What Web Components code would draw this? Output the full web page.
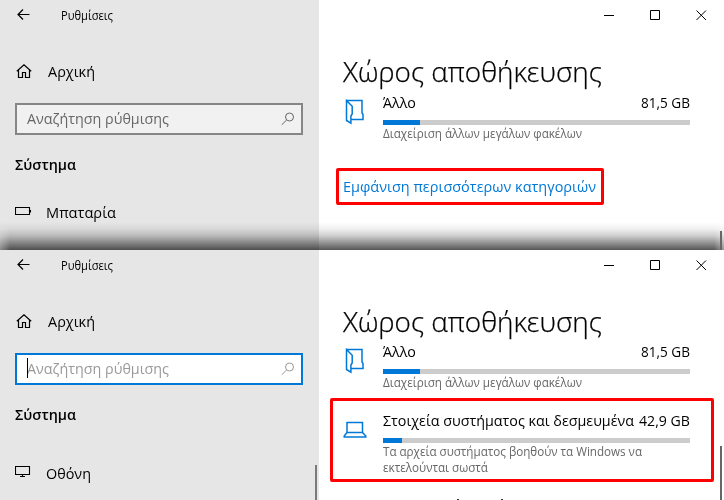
<!DOCTYPE html>
<html lang="el">
<head>
<meta charset="utf-8">
<title>Ρυθμίσεις</title>
<style>
html,body{margin:0;width:724px;height:500px;overflow:hidden;background:#fff}
body{font-family:"Open Sans","Noto Sans",sans-serif;color:#000}
</style>
</head>
<body>
<settings-shots></settings-shots>
<script>
const define = (name, html, setup) => customElements.define(name, class extends HTMLElement {
  connectedCallback() {
    if (this.shadowRoot) return;
    const root = this.attachShadow({mode: 'open'});
    root.innerHTML = typeof html === 'function' ? html(this) : html;
    if (setup) setup(this, root);
  }
});

/* One line of text, condensed or widened to the width given in pixels. */
define('fit-text', `<style>
:host{display:block;height:20px;line-height:20px;white-space:nowrap;font-size:15px}
span{display:inline-block;transform-origin:0 0}
</style><span><slot></slot></span>`, (el, root) => {
  const span = root.querySelector('span'), w = +el.getAttribute('width');
  el.style.width = w + 'px';
  span.style.transform = `scaleX(${w / span.getBoundingClientRect().width})`;
});

const icons = {
  back: [16, 12, '<path d="M12.500 5.500H1M6 .5l-5 5 5 5"/>'],
  home: [16, 16, '<path d="M.8 8.300 8 1.700l7.200 6.600M2.500 7.300v7.200h4V9.500h3v5h4V7.300"/>'],
  search: [14, 14, '<circle cx="8.500" cy="5" r="4"/><path d="M5.600 8 .7 12.800"/>'],
  battery: [17, 10, '<path d="M.5.500h14v7H.5zM15.500 3v2.500"/>'],
  screen: [16, 14, '<path d="M.5.500h14v8H.5zM7.500 8.500v2M5 10.500h5"/>'],
  folder: [20, 26, '<path d="M1.500 1.500H17V14l1 1.500v5H6M1.500 1.500v20l4.400 2.700V17l1.300-2V7.200z"/>'],
  laptop: [24, 17, '<path d="M4 1.500h15.500v10H4zM4 11.500 1.200 15v1h21.600v-1l-3.300-3.500"/>'],
  min: [11, 11, '<path d="M0 5.500h10"/>'],
  max: [11, 11, '<path d="M.5.500h9v9h-9z"/>'],
  close: [11, 11, '<path d="m.5.500 9.500 9.500M10 .5.500 10"/>']
};
define('line-icon', el => {
  const [w, h, p] = icons[el.getAttribute('name')];
  return `<style>:host{display:block;width:${w}px;height:${h}px;flex:none}svg{display:block}</style>
<svg width="${w}" height="${h}" viewBox="0 0 ${w} ${h}" fill="none" stroke="currentColor">${p}</svg>`;
}, (el, root) => { root.querySelector('svg').style.strokeWidth = el.getAttribute('stroke') || 1; });

define('search-box', `<style>
:host{display:flex;box-sizing:border-box;width:288px;height:32px;border:2px solid #868686;background:#f1f1f1;color:#666;padding:3px 6px 0 10px;justify-content:space-between;position:relative}
:host([active]){border-color:#0078d7;background:#fff;color:#999}
i{display:none;position:absolute;left:10px;top:3px;width:1px;height:20px;background:#000}
:host([active]) i{display:block}
line-icon{margin-top:4px}
</style><fit-text width="142">Αναζήτηση ρύθμισης</fit-text><i></i><line-icon name="search"></line-icon>`);

define('side-nav', el => `<style>
:host{display:block;position:relative;box-sizing:border-box;background:#e6e6e6;height:250px;padding-left:15px}
.bar{display:flex;height:30px;align-items:center;padding-left:2px}
.bar line-icon{margin-right:28px}
.bar fit-text{font-size:12px;padding-top:2px}
.row{display:flex;align-items:center;height:20px}
.home{margin:31px 0 22px;padding-left:1px}
.home line-icon{margin-right:16px}
.head{font-weight:600;margin-top:19px}
.item{margin-top:${el.getAttribute('gap')}px}
.item div{width:31px}
i{position:absolute;right:2px;bottom:0;width:2px;height:35px;background:#7a7a7a}
</style>
<div class="bar"><line-icon name="back" stroke="1.200"></line-icon><fit-text width="52">Ρυθμίσεις</fit-text></div>
<div class="row home"><line-icon name="home" stroke="1.200"></line-icon><fit-text width="47">Αρχική</fit-text></div>
<search-box ${el.hasAttribute('active') ? 'active' : ''}></search-box>
<fit-text class="head" width="61">Σύστημα</fit-text>
<div class="row item"><div><line-icon name="${el.getAttribute('icon')}" stroke="1.100"></line-icon></div><fit-text width="${el.getAttribute('width')}">${el.getAttribute('label')}</fit-text></div>
${el.hasAttribute('active') ? '<i></i>' : ''}`);

define('storage-row', el => `<style>
:host{display:grid;grid-template-columns:40px 307px}
line-icon{color:#0078d7;margin-top:${el.getAttribute('drop')}px;margin-left:${el.getAttribute('nudge')}px}
.top{display:flex;justify-content:space-between;height:20px}
.track{height:5px;margin-top:8px;background:#ccc}
.fill{height:5px;background:#0078d7;width:${el.getAttribute('fill')}px}
.sub{color:#666;margin-top:1px}
</style>
<line-icon name="${el.getAttribute('icon')}" stroke="1.500"></line-icon>
<div><div class="top"><fit-text width="${el.getAttribute('w1')}">${el.getAttribute('label')}</fit-text><fit-text width="${el.getAttribute('w2')}">${el.getAttribute('size')}</fit-text></div>
<div class="track"><div class="fill"></div></div>
<div class="sub"><slot></slot></div></div>`);

define('settings-window', `<style>
:host{display:grid;grid-template-columns:319px 405px;height:250px;overflow:hidden;position:relative}
main{padding-left:24px;height:250px;box-sizing:border-box;background:#fff}
.caption{display:flex;height:30px;align-items:center;justify-content:flex-end;gap:35px;padding-right:17px}
.title{font-size:27px;font-weight:300;height:36px;line-height:36px;margin-top:24px;-webkit-text-stroke:.25px #000}
</style>
<slot name="nav"></slot>
<main><div class="caption"><line-icon name="min"></line-icon><line-icon name="max"></line-icon><line-icon name="close"></line-icon></div>
<fit-text class="title" width="259">Χώρος αποθήκευσης</fit-text><slot></slot></main>`);

define('settings-shots', `<style>
:host{display:block}
.sub{font-size:12px;height:16px;line-height:16px}
.other{margin-top:2px}.other.up{margin-top:1px}
.mark{box-sizing:border-box;border:3px solid #f00;border-radius:2px}
.link{width:268px;height:37px;margin:26px 0 0 -7px;padding:5px 4px;color:#0078d7}
.system{width:384px;height:84px;margin:7px 0 0 -13px;padding:9px 10px}
.thumb{position:absolute;left:720px;bottom:0;width:2px;background:#666}
.shade{position:absolute;inset:222px 0 0;background:linear-gradient(transparent,rgba(0,0,0,.06) 25%,rgba(0,0,0,.2) 50%,rgba(0,0,0,.46) 78%,rgba(0,0,0,.66));-webkit-mask:linear-gradient(90deg,#0009,#000 10px,#000 714px,#0009)}
.peek{position:absolute;top:249px;width:2px;height:1px;background:#333}
</style>
<settings-window>
<side-nav slot="nav" gap="28" icon="battery" label="Μπαταρία" width="70"></side-nav>
<storage-row class="other" icon="folder" drop="7" nudge="2" fill="37" w1="33" w2="49" label="Άλλο" size="81,5 GB"><fit-text class="sub" width="199">Διαχείριση άλλων μεγάλων φακέλων</fit-text></storage-row>
<div class="mark link"><fit-text width="253">Εμφάνιση περισσότερων κατηγοριών</fit-text></div>
<div class="shade"></div><div class="thumb" style="height:19px"></div>
</settings-window>
<settings-window>
<side-nav slot="nav" active gap="39" icon="screen" label="Οθόνη" width="45"></side-nav>
<storage-row class="other up" icon="folder" drop="7" nudge="2" fill="37" w1="33" w2="49" label="Άλλο" size="81,5 GB"><fit-text class="sub" width="199">Διαχείριση άλλων μεγάλων φακέλων</fit-text></storage-row>
<div class="mark system"><storage-row icon="laptop" drop="11" nudge="0" fill="19" w1="251" w2="51" label="Στοιχεία συστήματος και δεσμευμένα" size="42,9 GB"><fit-text class="sub" width="259">Τα αρχεία συστήματος βοηθούν τα Windows να</fit-text><fit-text class="sub" width="105">εκτελούνται σωστά</fit-text></storage-row></div>
<div class="thumb" style="height:54px"></div><div class="peek" style="left:457px"></div><div class="peek" style="left:501px"></div>
</settings-window>`);
</script>
</body>
</html>
